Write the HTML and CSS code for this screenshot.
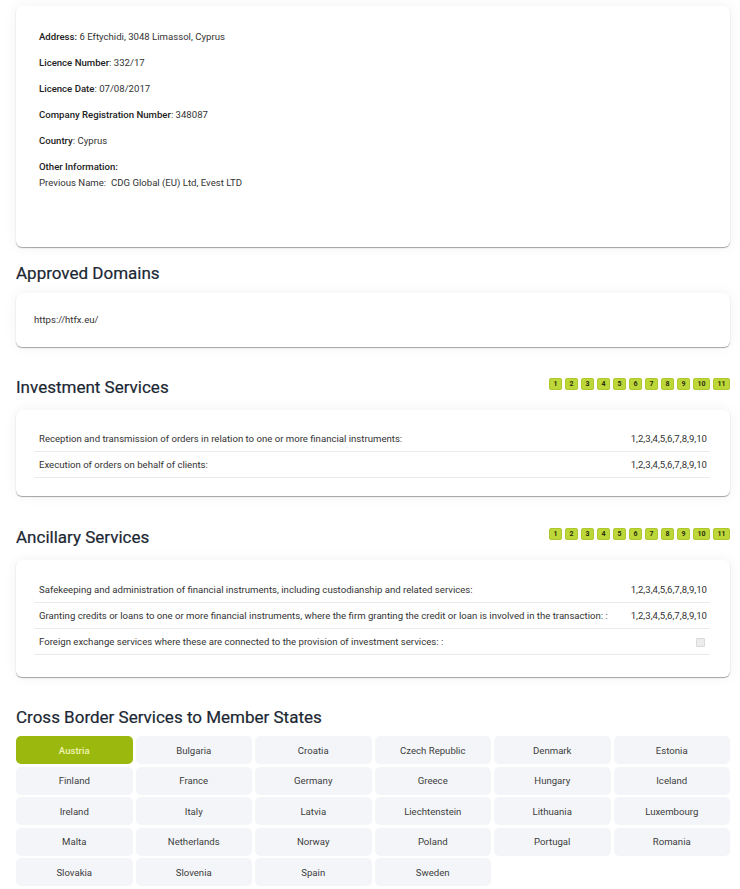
FILE: index.html
```html
<!DOCTYPE html>
<html lang="en">
<head>
<meta charset="utf-8">
<title>Company details</title>
<link rel="stylesheet" href="styles.css">
</head>
<body>
<main class="page">
  <section class="card info-card">
    <p><b>Address:</b> 6 Eftychidi, 3048 Limassol, Cyprus</p>
    <p><b>Licence Number</b>: 332/17</p>
    <p><b>Licence Date</b>: 07/08/2017</p>
    <p><b>Company Registration Number</b>: 348087</p>
    <p><b>Country</b>: Cyprus</p>
    <p class="other"><b>Other Information:</b><br>Previous Name:&nbsp; CDG Global (EU) Ltd, Evest LTD</p>
  </section>

  <h2 class="heading h-domains">Approved Domains</h2>
  <section class="card domain-card">
    <p>https://htfx.eu/</p>
  </section>

  <div class="section-head h-invest">
    <h2 class="heading">Investment Services</h2>
    <div class="badges">
      <span class="badge">1</span><span class="badge">2</span><span class="badge">3</span><span class="badge">4</span><span class="badge">5</span><span class="badge">6</span><span class="badge">7</span><span class="badge">8</span><span class="badge">9</span><span class="badge wide">10</span><span class="badge wide">11</span>
    </div>
  </div>
  <section class="card list-card">
    <div class="row"><span>Reception and transmission of orders in relation to one or more financial instruments:</span><span class="val">1,2,3,4,5,6,7,8,9,10</span></div>
    <div class="row"><span>Execution of orders on behalf of clients:</span><span class="val">1,2,3,4,5,6,7,8,9,10</span></div>
  </section>

  <div class="section-head h-anc">
    <h2 class="heading">Ancillary Services</h2>
    <div class="badges">
      <span class="badge">1</span><span class="badge">2</span><span class="badge">3</span><span class="badge">4</span><span class="badge">5</span><span class="badge">6</span><span class="badge">7</span><span class="badge">8</span><span class="badge">9</span><span class="badge wide">10</span><span class="badge wide">11</span>
    </div>
  </div>
  <section class="card list-card anc-card">
    <div class="row"><span>Safekeeping and administration of financial instruments, including custodianship and related services:</span><span class="val">1,2,3,4,5,6,7,8,9,10</span></div>
    <div class="row"><span>Granting credits or loans to one or more financial instruments, where the firm granting the credit or loan is involved in the transaction: :</span><span class="val">1,2,3,4,5,6,7,8,9,10</span></div>
    <div class="row"><span>Foreign exchange services where these are connected to the provision of investment services: :</span><span class="val"><span class="check"></span></span></div>
  </section>

  <h2 class="heading h-cross">Cross Border Services to Member States</h2>
  <div class="states">
    <span class="state active">Austria</span>
    <span class="state">Bulgaria</span>
    <span class="state">Croatia</span>
    <span class="state">Czech Republic</span>
    <span class="state">Denmark</span>
    <span class="state">Estonia</span>
    <span class="state">Finland</span>
    <span class="state">France</span>
    <span class="state">Germany</span>
    <span class="state">Greece</span>
    <span class="state">Hungary</span>
    <span class="state">Iceland</span>
    <span class="state">Ireland</span>
    <span class="state">Italy</span>
    <span class="state">Latvia</span>
    <span class="state">Liechtenstein</span>
    <span class="state">Lithuania</span>
    <span class="state">Luxembourg</span>
    <span class="state">Malta</span>
    <span class="state">Netherlands</span>
    <span class="state">Norway</span>
    <span class="state">Poland</span>
    <span class="state">Portugal</span>
    <span class="state">Romania</span>
    <span class="state">Slovakia</span>
    <span class="state">Slovenia</span>
    <span class="state">Spain</span>
    <span class="state">Sweden</span>
  </div>
</main>
</body>
</html>
```

FILE: styles.css
```css
* { box-sizing: border-box; }
html, body { margin: 0; padding: 0; background: #ffffff; }
body {
  font-family: Roboto, "Liberation Sans", Arial, sans-serif;
  font-size: 9.6px;
  color: #333;
}
.page {
  width: 714px;
  margin-left: 16px;
  padding-top: 6px;
}
.card {
  background: #fff;
  border-radius: 6px;
  box-shadow: 0 1px 1px rgba(0,0,0,0.35), 0 0 14px rgba(0,0,0,0.06);
}
p { margin: 0; line-height: 14px; }
b { font-weight: 500; color: #222; }

.info-card { padding: 24px 23px 56px; }
.info-card p + p { margin-top: 12px; }
.info-card p.other { line-height: 16px; margin-top: 11px; }

.heading {
  margin: 0;
  font-size: 17px;
  line-height: 22px;
  font-weight: 400;
  color: #1b2733;
  -webkit-text-stroke: 0.2px #1b2733;
}
.h-domains { margin-top: 15px; margin-bottom: 9px; }
.domain-card { padding: 20px 18px; }

.section-head {
  display: flex;
  justify-content: space-between;
  align-items: center;
  margin-bottom: 12px;
}
.h-invest { margin-top: 29px; }
.h-anc { margin-top: 30px; }
.badges { display: flex; gap: 3px; margin-top: -6px; }
.badge {
  display: inline-flex;
  align-items: center;
  justify-content: center;
  width: 13px;
  height: 12px;
  border-radius: 2px;
  background: #bed738;
  border: 1px solid #adc72c;
  color: #2a2f10;
  font-size: 7px;
  font-weight: 700;
}
.badge.wide { width: 17px; }

.list-card { padding: 16px 20px 18px 18px; }
.anc-card { padding-top: 17px; padding-bottom: 22px; }
.row {
  display: flex;
  justify-content: space-between;
  align-items: center;
  padding: 6px 3px 5px 5px;
  line-height: 14px;
  border-bottom: 1px solid #ebebeb;
}
.row > span:first-child { white-space: nowrap; }
.val { white-space: nowrap; margin-left: 6px; display: flex; align-items: center; }
.check {
  display: inline-block;
  width: 9px;
  height: 9px;
  border: 1px solid #d9d9d9;
  border-radius: 1px;
  background: #ececec;
  margin-right: 2px;
}

.h-cross { margin-top: 29px; margin-bottom: 8px; }
.states {
  display: grid;
  grid-template-columns: repeat(6, 1fr);
  column-gap: 3px;
  row-gap: 2.5px;
}
.state {
  height: 28px;
  display: flex;
  align-items: center;
  justify-content: center;
  background: #f3f5f8;
  border-radius: 5px;
  color: #3d3d3d;
}
.state.active {
  background: #9bb80e;
  color: #eef4b0;
  font-weight: 500;
}
```
